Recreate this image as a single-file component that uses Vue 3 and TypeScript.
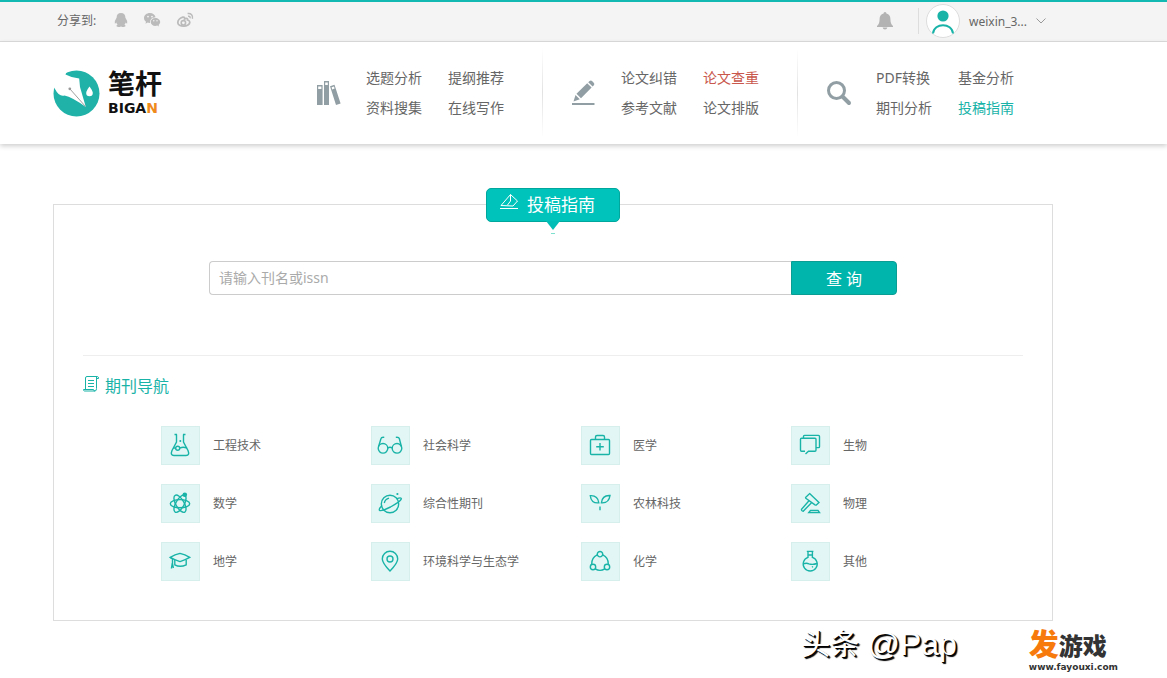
<script setup lang="ts">
import { ref } from 'vue'

interface NavLink {
  text: string
  tone?: 'hot' | 'active'
}
interface NavGroup {
  icon: 'books' | 'pencil' | 'search'
  links: NavLink[]
}
interface Category {
  name: string
  line: string[]
  dot?: string
}

const circle = (x: number, y: number, r: number): string =>
  `M${x - r} ${y}a${r} ${r} 0 1 0 ${2 * r} 0a${r} ${r} 0 1 0 ${-2 * r} 0`

const keyword = ref('')

const groups: NavGroup[] = [
  {
    icon: 'books',
    links: [{ text: '选题分析' }, { text: '提纲推荐' }, { text: '资料搜集' }, { text: '在线写作' }],
  },
  {
    icon: 'pencil',
    links: [{ text: '论文纠错' }, { text: '论文查重', tone: 'hot' }, { text: '参考文献' }, { text: '论文排版' }],
  },
  {
    icon: 'search',
    links: [{ text: 'PDF转换' }, { text: '基金分析' }, { text: '期刊分析' }, { text: '投稿指南', tone: 'active' }],
  },
]

const categories: Category[] = [
  {
    name: '工程技术',
    line: [
      'M13.5 8.5H16M22 8.5h2.5M15.5 8.5V16L11 24.5Q9 29.5 13 29.5H25Q29 29.5 27 24.5L22.5 16V8.5',
      'M12 22H14.5M19 22Q22 20.5 26 22',
      circle(16.7, 22.3, 2),
    ],
    dot: circle(19.3, 15, 1),
  },
  {
    name: '社会科学',
    line: [
      circle(12, 22.3, 4.8),
      circle(26, 22.3, 4.8),
      'M16.8 22Q19 20.6 21.2 22',
      'M7.6 20.5L10 12.5Q10.4 11 13.3 11.4M30.4 20.5L28.3 12.5Q27.9 11 24.8 11.4',
    ],
  },
  {
    name: '医学',
    line: [
      'M10.5 13.5H27.5Q28.5 13.5 28.5 14.5V27.5Q28.5 28.5 27.5 28.5H10.5Q9.5 28.5 9.5 27.5V14.5Q9.5 13.5 10.5 13.5Z',
      'M14.5 13.5V11Q14.5 9.5 16 9.5H22Q23.5 9.5 23.5 11V13.5',
      'M19 17V24.5M15.2 20.7H22.8',
    ],
  },
  {
    name: '生物',
    line: [
      'M14 25.2H10.5Q9.5 25.2 9.5 24V13.2Q9.5 12.2 10.5 12.2H24Q25 12.2 25 13.2V24Q25 25.2 24 25.2H17.5L14.5 28',
      'M12.5 12V10.3Q12.5 9.4 13.5 9.4H27.5Q28.5 9.4 28.5 10.4V20.7Q28.5 21.6 27.5 21.6H25',
    ],
  },
  {
    name: '数学',
    line: [
      'M9.3 19.7a9.7 4.1 0 1 0 19.4 0a9.7 4.1 0 1 0 -19.4 0',
      'M14.15 11.3a9.7 4.1 60 1 0 9.7 16.8a9.7 4.1 60 1 0 -9.7 -16.8',
      'M23.85 11.3a9.7 4.1 120 1 0 -9.7 16.8a9.7 4.1 120 1 0 9.7 -16.8',
    ],
    dot: circle(23.8, 10.8, 2.3),
  },
  {
    name: '综合性期刊',
    line: [
      circle(19, 20, 8.7),
      'M11 21.5Q7.5 25 8.5 26.3Q10.5 27.5 19.5 23Q29.5 17.5 30.4 14.8Q30.3 13 26 14.6',
      'M13.3 19Q14 15.3 18 14.2',
    ],
    dot: circle(26.4, 10, 1.1),
  },
  {
    name: '农林科技',
    line: [
      'M9.3 11.7Q16.8 11.2 17.8 18.8Q10 19.6 9.3 11.7Z',
      'M29 11.5Q21.3 11 20.4 18.8Q28 19.4 29 11.5Z',
      'M19 22.5V26.2',
    ],
  },
  {
    name: '物理',
    line: [
      'M18.6 9.6L28 18.4L25.4 21Q24.8 21.3 24 20.8L14.8 14.2Q14.3 13.7 14.8 13.2Z',
      'M18 16.8L10.5 25.3Q10.3 27 12.2 27.2L20.5 18.8',
      'M19.5 26.5H27L28.5 28.6H17.8Z',
    ],
  },
  {
    name: '地学',
    line: [
      'M9.2 15.3Q14 12.6 19 11.4Q24 12.6 28.7 15.3Q24 18 19 19.6Q14 18 9.2 15.3Z',
      'M13.8 18V22.8Q19 25.8 25.2 22.8V18M9.6 15.8L11.5 17V21.5M10.4 26.5L11.3 21L12.4 26',
    ],
  },
  {
    name: '环境科学与生态学',
    line: ['M19 29Q11.3 21 11.3 17A7.7 7.7 0 0 1 26.7 17Q26.7 21 19 29Z', circle(19, 17, 3)],
  },
  {
    name: '化学',
    line: [
      circle(19, 12.2, 2.7),
      circle(12, 25, 2.7),
      circle(26, 25, 2.7),
      'M16.2 12.8Q10.5 15.4 10.7 22.3M21.8 12.8Q27.5 15.4 27.3 22.3M14.2 26.8Q19 30 23.8 26.8',
    ],
  },
  {
    name: '其他',
    line: [
      'M15.8 9.4H22.4M17 9.6V15.4A7 7 0 1 0 21.4 15.4V9.6M17 13H21.4',
      'M12.3 21.8Q15.5 20.8 18 21.8Q21.5 23 26 21.5',
      'M21 25.3L22 24.4',
    ],
  },
]
</script>

<template>
  <div class="page">
    <div class="topbar">
      <div class="share">
        <span class="share-label">分享到:</span>
        <a href="#" aria-label="QQ">
          <svg width="14" height="16" viewBox="0 0 14 16">
            <path fill="#bbb" d="M7 1C4 1 2.6 3 2.6 5.8Q.4 8.8 .8 11.4Q1.4 11.8 2.3 10.5Q2.6 11.8 3.6 12.8Q2.2 13.3 2.5 14.2Q4 15.5 7 14.4Q10 15.5 11.5 14.2Q11.8 13.3 10.4 12.8Q11.4 11.8 11.7 10.5Q12.6 11.8 13.2 11.4Q13.6 8.8 11.4 5.8C11.4 3 10 1 7 1Z" />
          </svg>
        </a>
        <a href="#" aria-label="微信">
          <svg width="18" height="16" viewBox="0 0 18 16">
            <path fill="#bbb" d="M7 1C3.5 1 1 3.2 1 6C1 7.6 1.9 8.9 3 9.7L2.5 11.8L4.7 10.6Q5.8 11 7 10.9C6.6 7.5 9.2 5.3 12.6 5.2C12 2.7 9.8 1 7 1Z" />
            <path fill="#bbb" d="M12.3 6C9.6 6 7.7 7.8 7.7 10C7.7 12.3 9.8 14 12.3 14Q13.3 14 14.2 13.6L16 14.6L15.6 12.9C16.6 12.1 17.2 11.2 17.2 10C17.2 7.8 15 6 12.3 6Z" />
            <g fill="#f4f4f4"><circle cx="5" cy="4.6" r=".9" /><circle cx="9" cy="4.6" r=".9" /><circle cx="10.8" cy="8.8" r=".7" /><circle cx="14" cy="8.8" r=".7" /></g>
          </svg>
        </a>
        <a href="#" aria-label="微博">
          <svg width="18" height="16" viewBox="0 0 18 16" fill="none" stroke="#bbb">
            <path stroke-width="1.8" d="M6.8 5.2C4 6 1.8 8.5 1.8 10.5C1.8 12.8 4.6 14.2 7.6 14.2C11 14.2 13.8 12.3 13.8 10.2C13.8 9 12.8 8.3 11.6 8C12 6.5 11 6 8.6 7C8.8 5.6 8.2 4.9 6.8 5.2Z" />
            <circle cx="7.4" cy="10.8" r="2.2" stroke-width="1.6" />
            <path stroke-width="1.5" d="M11.6 1.5C15 .9 17.3 3.4 16.4 6.8M12 4.2C13.5 3.9 14.4 4.8 14 6.2" />
          </svg>
        </a>
      </div>
      <div class="account">
        <button class="bell" type="button" aria-label="消息">
          <svg width="18" height="20" viewBox="0 0 18 20">
            <path fill="#b3b3b3" d="M9 1C8 1 7.6 1.8 7.6 2.6C4.8 3.3 3.6 5.3 3.6 8C3.6 11.5 2.8 13.2 1 15V16H17V15C15.2 13.2 14.4 11.5 14.4 8C14.4 5.3 13.2 3.3 10.4 2.6C10.4 1.8 10 1 9 1ZM6.6 16.5H11.4Q11 18.6 9 18.6Q7 18.6 6.6 16.5Z" />
          </svg>
        </button>
        <button class="user" type="button">
          <svg width="34" height="34" viewBox="0 0 34 34">
            <circle cx="17" cy="17" r="16.5" fill="#fff" stroke="#ddd" />
            <circle cx="17" cy="12" r="5.6" fill="#19b3a8" />
            <path d="M7 29.5C8 18.5 26 18.5 27 29.5" fill="none" stroke="#19b3a8" stroke-width="2" />
          </svg>
          <span>weixin_3...</span>
          <svg width="10" height="6" viewBox="0 0 10 6"><path d="M.5 .5L5 5L9.5 .5" fill="none" stroke="#999" /></svg>
        </button>
      </div>
    </div>

    <header class="header">
      <a class="logo" href="#">
        <svg width="47" height="47" viewBox="0 0 47 47">
          <circle cx="23.5" cy="23.5" r="23" fill="#20b2a8" />
          <path fill="#fff" d="M0 0H14L12.5 4.5Q19 8 26.2 8.5L27 17L32.8 37Q19 27 11.5 25.5Q6 27 2 19L0 16Z" />
          <path d="M17 19L32.5 36.5" stroke="#888" stroke-width=".8" />
          <circle cx="16.8" cy="18.8" r="1.4" fill="#999" />
          <path fill="#fff" d="M36.5 16.5Q33.2 21 33.2 23A3.3 3.3 0 0 0 39.8 23Q39.8 21 36.5 16.5Z" />
        </svg>
        <span class="logo-text">
          <strong>笔杆</strong>
          <span class="latin">BIGA<em>N</em></span>
        </span>
      </a>
      <nav class="nav">
        <div v-for="group in groups" :key="group.icon" class="group">
          <svg v-if="group.icon === 'books'" class="group-icon" viewBox="0 0 26 26" fill="#919ea3">
            <path fill-rule="evenodd" d="M1 5H6.6V25H1ZM2.2 6.5V9H5.4V6.5ZM8 1H13V25H8ZM9.2 2.5V5H11.8V2.5Z" />
            <path fill-rule="evenodd" d="M14 6.2L18.5 4.8L24.6 23.5L20 25ZM15.6 7.3L16.2 9.4L18.6 8.6L18 6.5Z" />
          </svg>
          <svg v-else-if="group.icon === 'pencil'" class="group-icon" viewBox="0 0 26 26" fill="#919ea3">
            <path d="M2.5 21.5L4.5 15L8.8 19.3ZM5.5 13.7L16.2 3.2L20.6 7.6L10 18.2ZM17.2 2.2L18.6 .9Q20 0 21.3 1.2L22.7 2.7Q24 4 22.9 5.3L21.6 6.6Z" />
            <path d="M1 23H23.5V25H1Z" />
          </svg>
          <svg v-else class="group-icon" viewBox="0 0 26 26" fill="none" stroke="#919ea3">
            <circle cx="10.5" cy="10.5" r="8" stroke-width="3" />
            <path d="M17 17L23 23" stroke-width="4" stroke-linecap="round" />
          </svg>
          <div class="links">
            <a v-for="link in group.links" :key="link.text" href="#" :class="link.tone">{{ link.text }}</a>
          </div>
        </div>
      </nav>
    </header>

    <main class="panel">
      <h1 class="badge">
        <svg width="20" height="18" viewBox="0 0 20 18" fill="none" stroke="#fff">
          <path d="M1 15.5H19M2 12.5L11.5 1.5L18.5 8L14 13L2 12.5ZM11.5 1.5V8L8.5 12" />
        </svg>
        <span>投稿指南</span>
        <svg class="pointer" width="14" height="14" viewBox="0 0 14 14">
          <path fill="#00beb5" d="M0 0H14L7 9Z" /><path fill="#7ee0cf" d="M5 12H9V13H5Z" />
        </svg>
      </h1>

      <form class="search" @submit.prevent>
        <input v-model="keyword" type="text" placeholder="请输入刊名或issn" aria-label="刊名或issn" />
        <button type="submit">查 询</button>
      </form>

      <section class="guide">
        <h2>
          <svg width="16" height="16" viewBox="0 0 16 16" fill="none" stroke="#19b3a8">
            <path d="M2.5 13V2Q2.5 .5 4 .5H14.5Q15.5 .5 15.5 2.5H13.5M13.5 1V12.5Q13.5 15 12 15H1.5Q.5 15 .5 13.5H10.5Q10.5 15 12 15M5 4.5H11M5 7.5H11M5 10.5H11" />
          </svg>
          期刊导航
        </h2>
        <ul>
          <li v-for="item in categories" :key="item.name">
            <a href="#">
              <span class="tile">
                <svg viewBox="0 0 39 39">
                  <path v-for="d in item.line" :key="d" :d="d" class="line" />
                  <path v-if="item.dot" :d="item.dot" class="dot" />
                </svg>
              </span>
              {{ item.name }}
            </a>
          </li>
        </ul>
      </section>
    </main>

    <footer class="footer">
      <span class="credit">头条 <span class="handle">@Pap</span></span>
      <a class="site" href="#">
        <span class="site-name"><b>发</b>游戏</span>
        <span class="site-url">www.fayouxi.com</span>
      </a>
    </footer>
  </div>
</template>

<style>
body {
  margin: 0;
  background: #fff;
}
</style>

<style scoped>
.page {
  font-family: "Noto Sans", "Noto Sans CJK SC", sans-serif;
  font-size: 14px;
  color: #666;
}
a {
  color: inherit;
  text-decoration: none;
}
button {
  border: 0;
  background: none;
  padding: 0;
  font: inherit;
  color: inherit;
}
svg {
  display: block;
  flex: none;
}
.topbar {
  display: flex;
  justify-content: space-between;
  align-items: center;
  box-sizing: border-box;
  height: 42px;
  padding: 0 121px 0 57px;
  border-top: 2px solid #12b9b3;
  border-bottom: 1px solid #ddd;
  background: #f4f4f4;
}
.share,
.account,
.user {
  display: flex;
  align-items: center;
}
.share {
  gap: 15px;
  padding-bottom: 3px;
  font-size: 12px;
}
.share-label {
  width: 42px;
  white-space: nowrap;
}
.account {
  padding-bottom: 1px;
}
.bell {
  padding: 0 24px 0 0;
}
.user {
  gap: 9px;
  padding-left: 8px;
  font-size: 12px;
  background: linear-gradient(#ddd, #ddd) no-repeat 0 50% / 1px 26px;
}
.header {
  display: flex;
  align-items: center;
  height: 102px;
  padding-left: 53px;
  box-shadow: 0 2px 5px rgba(0, 0, 0, 0.2);
}
.logo {
  display: flex;
  align-items: center;
  gap: 8px;
  width: 235px;
  color: #111;
}
.logo-text {
  display: flex;
  flex-direction: column;
}
.logo strong {
  font-family: "Liberation Sans", "Noto Sans CJK SC", sans-serif;
  font-size: 27px;
  line-height: 30px;
  font-weight: 700;
}
.latin {
  font: 700 14px/16px "DejaVu Sans", sans-serif;
}
.latin em {
  color: #ef8a1c;
  font-style: normal;
}
.nav {
  display: flex;
}
.group {
  display: flex;
  align-items: center;
  gap: 24px;
  box-sizing: border-box;
  width: 255px;
  height: 90px;
  padding-left: 28px;
  background: linear-gradient(#fff, #e2e2e2 50%, #fff) no-repeat 100% 0 / 1px 90px;
}
.group:last-child {
  background: none;
}
.group-icon {
  width: 26px;
  height: 26px;
}
.links {
  display: grid;
  grid-template-columns: 82px 82px;
  line-height: 30px;
  white-space: nowrap;
}
.hot {
  color: #c9574c;
}
.active {
  color: #19b3a8;
}
.panel {
  margin: 60px 114px 0 53px;
  padding: 0 29px 39px;
  border: 1px solid #ddd;
}
.badge {
  position: relative;
  display: flex;
  gap: 8px;
  box-sizing: border-box;
  width: 134px;
  height: 34px;
  margin: -17px auto 0;
  padding: 4px 0 0 12px;
  border: 1px solid #00a79d;
  border-radius: 5px;
  background: #00c3bb;
  color: #fff;
  font-size: 17px;
  line-height: 24px;
  font-weight: 400;
}
.pointer {
  position: absolute;
  top: 32px;
  left: 59px;
}
.search {
  display: flex;
  max-width: 688px;
  margin: 39px auto 60px;
}
.search input {
  flex: 1;
  min-width: 0;
  box-sizing: border-box;
  height: 34px;
  padding: 0 9px 2px;
  border: 1px solid #ccc;
  border-right: 0;
  border-radius: 4px 0 0 4px;
  outline: 0;
  background: #fff;
  font: inherit;
  color: #555;
}
.search input::placeholder {
  color: #aaa;
}
.search button {
  width: 106px;
  height: 34px;
  border: 1px solid #0a9d94;
  border-radius: 0 4px 4px 0;
  background: #00b5ac;
  color: #fff;
  font-size: 16px;
}
.guide {
  border-top: 1px solid #eee;
}
.guide h2 {
  display: flex;
  gap: 6px;
  margin: 20px 0 30px;
  font-size: 16px;
  line-height: 20px;
  font-weight: 400;
  color: #19b3a8;
}
.guide ul {
  display: grid;
  grid-template-columns: repeat(4, 1fr);
  row-gap: 19px;
  margin: 0 22px 0 78px;
  padding: 0;
  list-style: none;
}
.guide li a {
  display: flex;
  align-items: center;
  gap: 13px;
  font-size: 12px;
  line-height: 16px;
  white-space: nowrap;
}
.tile {
  box-sizing: border-box;
  width: 39px;
  height: 39px;
  background: #e2f7f5;
  box-shadow: inset 0 0 0 1px #d6efec;
}
.line {
  fill: none;
  stroke: #19b3a8;
  stroke-width: 1.4;
}
.dot {
  fill: #19b3a8;
}
.footer {
  display: flex;
  justify-content: flex-end;
  gap: 72px;
  padding: 4px 49px 0 0;
}
.credit {
  font-family: "Liberation Sans", "Noto Sans CJK SC", sans-serif;
  font-size: 29px;
  line-height: 38px;
  color: #fff;
  text-shadow: 1px 1px 0 #000, 2px 2px 1px #000;
}
.handle {
  font-size: 32px;
}
.site {
  display: flex;
  flex-direction: column;
  padding-top: 4px;
  color: #333;
  font-weight: 900;
}
.site-name {
  font-family: "Liberation Sans", "Noto Sans CJK SC", sans-serif;
  font-size: 24px;
  line-height: 31px;
}
.site-name b {
  font-size: 30px;
  font-weight: 900;
  color: #f77a0c;
}
.site-url {
  font: 700 9px/10px "DejaVu Sans", sans-serif;
}
</style>
